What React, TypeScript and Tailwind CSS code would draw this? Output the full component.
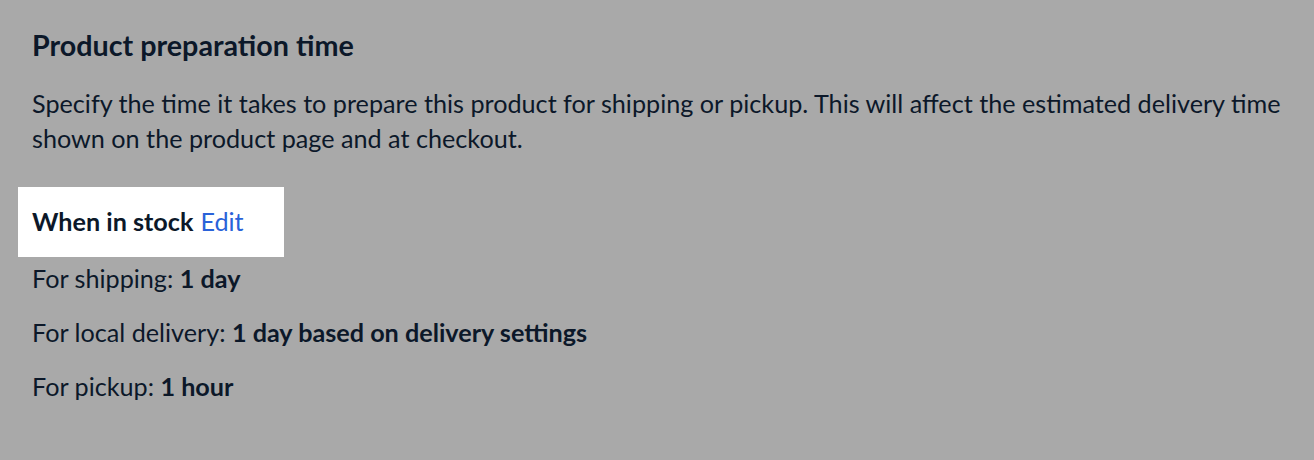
export default function App() {
  return (
    <div className="w-[1314px] h-[460px] bg-[#a9a9a9] text-[#0c1829] font-['Lato','Noto_Sans',sans-serif] overflow-hidden">
      <div className="pl-8 pt-[28px] flex flex-col">
        <h2 className="text-[28.7px] leading-[34px] font-bold">Product preparation time</h2>
        <p className="mt-[24px] text-[25.2px] leading-[35px] pr-6">
          Specify the time it takes to prepare this product for shipping or pickup. This will affect the estimated delivery time shown on the product page and at checkout.
        </p>
        <div className="mt-[31px] -ml-[14px] w-[266px] h-[70px] bg-white flex items-center px-[14px]">
          <span className="text-[25.2px] font-bold">When in stock</span>
          <a className="ml-[7px] text-[25.2px] text-[#2a62d9]">Edit</a>
        </div>
        <div className="mt-[6px] flex flex-col gap-6 text-[25.2px] leading-[30px]">
          <div>For shipping: <span className="font-bold">1 day</span></div>
          <div>For local delivery: <span className="font-bold">1 day based on delivery settings</span></div>
          <div>For pickup: <span className="font-bold">1 hour</span></div>
        </div>
      </div>
    </div>
  );
}
